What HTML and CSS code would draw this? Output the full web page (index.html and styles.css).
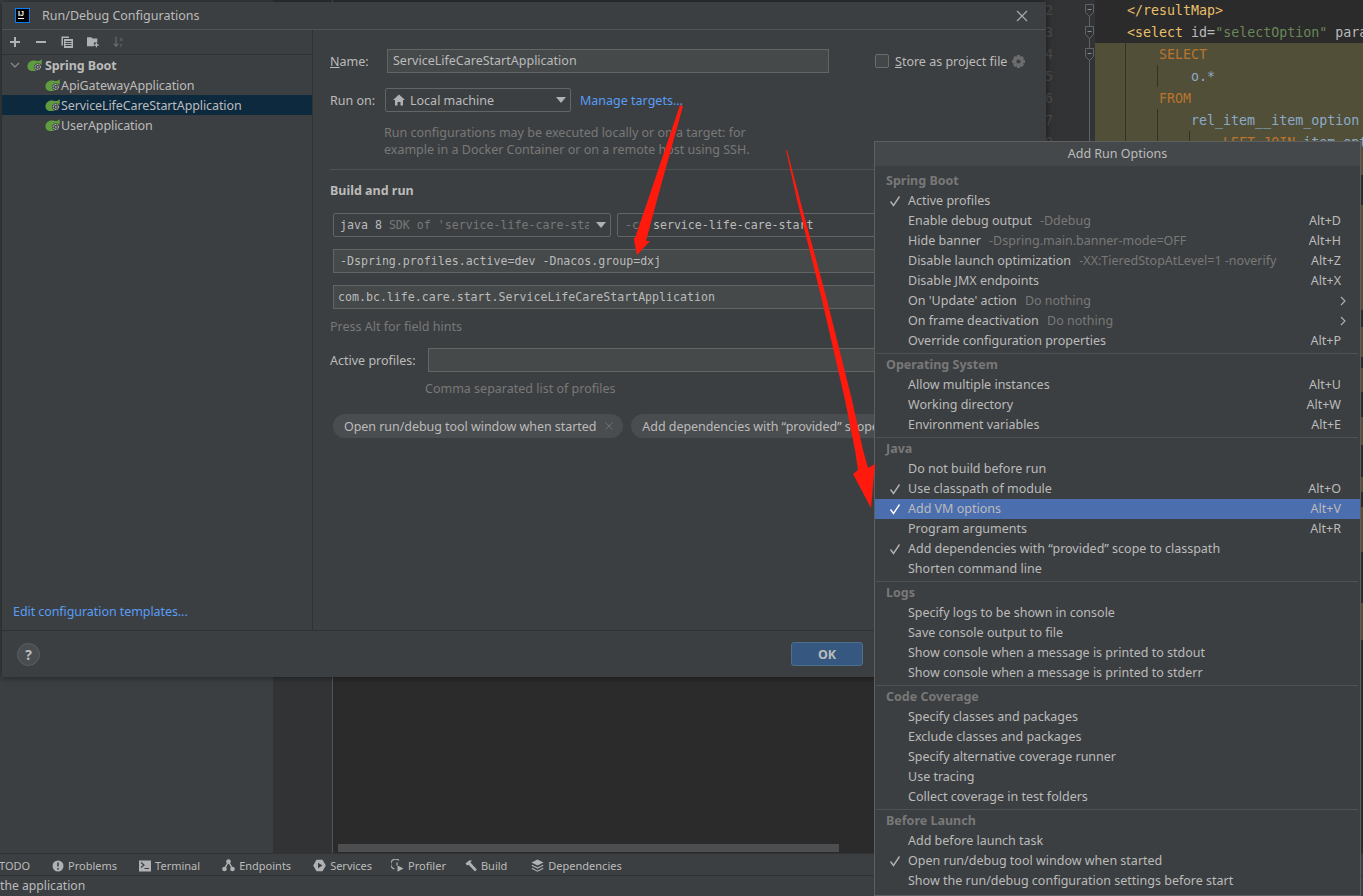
FILE: index.html
```html
<!DOCTYPE html>
<html lang="en">
<head>
  <meta charset="UTF-8" />
  <title>Run/Debug Configurations</title>
  <link rel="stylesheet" href="styles.css">
</head>
<body>

  <svg class="icon-defs" width="0" height="0">
    <symbol id="spring" viewBox="0 0 17 14">
      <path d="M.5 8.500C.5 3 6 1.500 9.500 2.500 11.500 3 14.500 2.500 15.500 .5 16.500 5 15 10 12 12 8 14.500 .5 14 .5 8.500Z" fill="#5f9b3f"/>
      <circle cx="11.500" cy="9" r="3.900" fill="#3c3f41"/>
      <circle cx="11.500" cy="9" r="2.700" fill="none" stroke="#afb1b3" stroke-width="1.200" stroke-dasharray="1.400 .5"/>
      <circle cx="11.500" cy="9" r=".9" fill="#afb1b3"/>
    </symbol>
    <symbol id="fold" viewBox="0 0 9 13">
      <path d="M.5 .5H8.500V8.500L4.500 12.500.5 8.500Z" fill="#313335" stroke="#606366"/>
      <path d="M2.500 5.500H6.500" stroke="#8b8d8f"/>
    </symbol>
    <symbol id="check" viewBox="0 0 12 12">
      <path d="M1.500 6.500 4.500 10.500 10.500 1.500" fill="none" stroke="currentColor" stroke-width="1.400"/>
    </symbol>
    <symbol id="chevron" viewBox="0 0 6 10">
      <path d="M1 1 5 5 1 9" fill="none" stroke="#afb1b3" stroke-width="1.100"/>
    </symbol>
  </svg>

  <div class="ide">
    <div class="ide-main">
      <div class="project-panel"></div>
      <div class="tool-gutter"></div>

      <div class="work-area">
        <div class="editor">
          <div class="line-gutter">
            <div class="gutter-line">2 <svg class="fold"><use href="#fold"/></svg></div>
            <div class="gutter-line">3 <svg class="fold"><use href="#fold"/></svg></div>
            <div class="gutter-line">4 <svg class="fold"><use href="#fold"/></svg></div>
            <div class="gutter-line">5</div>
            <div class="gutter-line">6</div>
            <div class="gutter-line">7</div>
            <div class="gutter-line">8</div>
          </div>
          <div class="code">
            <div class="code-line">    <span class="tag">&lt;/resultMap&gt;</span></div>
            <div class="code-line">    <span class="tag">&lt;select</span> <span class="attr">id=</span><span class="str">"selectOption"</span> <span class="attr">para</span></div>
            <div class="code-line sql guide-1">        <span class="kw">SELECT</span></div>
            <div class="code-line sql guide-2">            <span class="col">o.*</span></div>
            <div class="code-line sql guide-1">        <span class="kw">FROM</span></div>
            <div class="code-line sql guide-2">            <span class="col">rel_item__item_option</span></div>
            <div class="code-line sql guide-3">                <span class="kw">LEFT JOIN</span> <span class="col">item_opt</span></div>
            <div class="code-rest"></div>
          </div>
        </div>

        <div class="run-panel">
          <div class="run-scrollbar"></div>
        </div>
      </div>
    </div>

    <div class="tool-strip">
      <span class="tool-item tool-todo">TODO</span>
      <span class="tool-item">
        <svg class="tool-icon" viewBox="0 0 12 12"><circle cx="6" cy="6" r="5.500" fill="#afb1b3"/><path d="M6 2.500V6.500M6 8V9.500" stroke="#3c3f41" stroke-width="1.600"/></svg>
        Problems
      </span>
      <span class="tool-item">
        <svg class="tool-icon" viewBox="0 0 12 12"><rect width="12" height="11" y=".5" fill="#afb1b3"/><path d="M2 2.500 5 5 2 7.500M5.500 8.500H10" fill="none" stroke="#3c3f41" stroke-width="1.200"/></svg>
        Terminal
      </span>
      <span class="tool-item">
        <svg class="tool-icon wide" viewBox="0 0 13 13"><path d="M2.500 10 6.500 2.500 10.500 10" fill="none" stroke="#afb1b3" stroke-width="1.500"/><circle cx="2.500" cy="10" r="2.300" fill="#afb1b3"/><circle cx="6.500" cy="2.500" r="2.300" fill="#afb1b3"/><circle cx="10.500" cy="10" r="2.300" fill="#afb1b3"/></svg>
        Endpoints
      </span>
      <span class="tool-item">
        <svg class="tool-icon wide" viewBox="0 0 13 13"><path d="M3.500 .8H9.500L12.800 6.500 9.500 12.200H3.500L.2 6.500Z" fill="#afb1b3"/><path d="M5 3.800 9.500 6.500 5 9.200Z" fill="#3c3f41"/></svg>
        Services
      </span>
      <span class="tool-item tool-profiler">
        <svg class="tool-icon wide" viewBox="0 0 12 13"><path d="M7.500 1.400A5 5 0 1 0 3 10" fill="none" stroke="#afb1b3" stroke-width="1.200"/><path d="M5.500 3.500V6.500" stroke="#afb1b3" stroke-width="1.200"/><path d="M6 6.500 12 9.500 6 12.800Z" fill="#afb1b3"/></svg>
        Profiler
      </span>
      <span class="tool-item tool-build">
        <svg class="tool-icon" viewBox="0 0 12 12"><path d="M.5 3.500 4 .5H7L5.500 2.500 11.800 9.500 10 11.500 3.500 4.800 2 5.500Z" fill="#afb1b3"/></svg>
        Build
      </span>
      <span class="tool-item tool-deps">
        <svg class="tool-icon wide" viewBox="0 0 13 13"><path d="M6.500 .5 12.500 3.500 6.500 6.500 .5 3.500Z" fill="#afb1b3"/><path d="M.8 6.300 6.500 9 12.200 6.300M.8 9.300 6.500 12.200 12.200 9.300" fill="none" stroke="#afb1b3" stroke-width="1.200"/></svg>
        Dependencies
      </span>
    </div>

    <div class="status-bar">the application</div>
  </div>

  <!-- Run/Debug dialog -->
  <div class="dialog">
    <div class="dialog-title">
      <span class="ij-logo"><span class="ij-text">IJ</span><span class="ij-bar"></span></span>
      <span class="dialog-name">Run/Debug Configurations</span>
      <svg class="dialog-close" viewBox="0 0 12 12"><path d="M1 1 11 11M11 1 1 11" stroke="#a8aaab" stroke-width="1.200"/></svg>
    </div>

    <div class="dialog-main">
      <div class="tree-pane">
        <div class="tree-toolbar">
          <svg class="tb-icon" viewBox="0 0 12 12"><path d="M6 1V11M1 6H11" stroke="#afb1b3" stroke-width="2"/></svg>
          <svg class="tb-icon" viewBox="0 0 12 12"><path d="M1 6H11" stroke="#afb1b3" stroke-width="2"/></svg>
          <svg class="tb-icon" viewBox="0 0 12 12"><path d="M.5 .5H8V2H2V9.500H.5Z" fill="#afb1b3"/><rect x="3" y="3" width="9" height="9" fill="#afb1b3"/><path d="M4.500 5.500H10.500M4.500 7.500H10.500M4.500 9.500H10.500" stroke="#3c3f41"/></svg>
          <svg class="tb-icon" viewBox="0 0 14 13"><path d="M0 1H5L6.500 2.500H12V7H8V11.500H0Z" fill="#afb1b3"/><path d="M11 7.500V12.500M8.500 10H13.500" stroke="#afb1b3" stroke-width="1.500"/></svg>
          <svg class="tb-icon" viewBox="0 0 14 13"><path d="M3.500 .5V11M1 8.500 3.500 11.500 6 8.500" fill="none" stroke="#6a6c6e" stroke-width="1.300"/><text class="sort-a" x="7.500" y="5.500">a</text><text class="sort-a" x="7.500" y="12.500">z</text></svg>
        </div>

        <div class="tree">
          <div class="tree-row">
            <svg class="tree-arrow" viewBox="0 0 10 6"><path d="M1 1 5 5 9 1" fill="none" stroke="#8b8d8f" stroke-width="1.200"/></svg>
            <svg class="spring"><use href="#spring"/></svg>
            <span class="tree-group">Spring Boot</span>
          </div>
          <div class="tree-row tree-child">
            <svg class="spring"><use href="#spring"/></svg>
            ApiGatewayApplication
          </div>
          <div class="tree-row tree-child selected">
            <svg class="spring"><use href="#spring"/></svg>
            ServiceLifeCareStartApplication
          </div>
          <div class="tree-row tree-child">
            <svg class="spring"><use href="#spring"/></svg>
            UserApplication
          </div>
        </div>

        <a class="templates-link">Edit configuration templates...</a>
      </div>

      <div class="config-pane">
        <div class="form-row name-row">
          <label class="form-label name-label"><u>N</u>ame:</label>
          <div class="field name-field">ServiceLifeCareStartApplication</div>
          <span class="store-box"></span>
          <span class="store-label"><u>S</u>tore as project file</span>
          <svg class="store-gear" viewBox="0 0 14 14"><path d="M5.500 0H8.500L9 2 10.800 1.200 12.800 3.200 12 5 14 5.500V8.500L12 9 12.800 10.800 10.800 12.800 9 12 8.500 14H5.500L5 12 3.200 12.800 1.200 10.800 2 9 0 8.500V5.500L2 5 1.200 3.200 3.200 1.200 5 2Z" fill="#6a6c6e"/><circle cx="7" cy="7" r="2.200" fill="#3c3f41"/></svg>
        </div>

        <div class="form-row run-row">
          <label class="form-label run-label">Run on:</label>
          <div class="combo run-combo">
            <svg class="home-icon" viewBox="0 0 12 12"><path d="M6 .5 12 6H10V11.500H7.500V8H4.500V11.500H2V6H0Z" fill="#afb1b3"/></svg>
            Local machine
            <span class="combo-arrow"></span>
          </div>
          <a class="manage-link">Manage targets...</a>
        </div>

        <p class="run-help">Run configurations may be executed locally or on a target: for<br>example in a Docker Container or on a remote host using SSH.</p>

        <div class="section-rule"></div>
        <h3 class="section-title">Build and run</h3>

        <div class="form-row build-row">
          <div class="combo sdk-combo mono"><span class="sdk-text">java 8 <span class="mono-dim">SDK of 'service-life-care-sta</span></span><span class="combo-arrow"></span></div>
          <div class="combo module-combo mono"><span class="mono-dim">-cp</span> <span class="module-name">service-life-care-start</span></div>
        </div>
        <div class="field wide-field vm-field mono">-Dspring.profiles.active=dev -Dnacos.group=dxj</div>
        <div class="field wide-field main-field mono">com.bc.life.care.start.ServiceLifeCareStartApplication</div>

        <div class="field-hint">Press Alt for field hints</div>

        <div class="form-row profile-row">
          <label class="form-label profile-label">Active profiles:</label>
          <div class="field profile-field"></div>
        </div>
        <div class="profile-hint">Comma separated list of profiles</div>

        <div class="chips">
          <span class="chip">Open run/debug tool window when started
            <svg class="chip-close" viewBox="0 0 8 8"><path d="M.5 .5 7.500 7.500M7.500 .5 .5 7.500" stroke="#6e7072"/></svg>
          </span>
          <span class="chip">Add dependencies with “provided” scope to classpath</span>
        </div>
      </div>
    </div>

    <div class="dialog-footer">
      <span class="help-btn">?</span>
      <button class="ok-btn">OK</button>
    </div>
  </div>

  <!-- Add Run Options popup -->
  <div class="popup">
    <div class="popup-title">Add Run Options</div>

    <div class="popup-section">
      <div class="popup-heading">Spring Boot</div>
      <div class="popup-item"><svg class="check"><use href="#check"/></svg>Active profiles</div>
      <div class="popup-item">Enable debug output <span class="hint">-Ddebug</span><span class="keys">Alt+D</span></div>
      <div class="popup-item">Hide banner <span class="hint">-Dspring.main.banner-mode=OFF</span><span class="keys">Alt+H</span></div>
      <div class="popup-item">Disable launch optimization <span class="hint">-XX:TieredStopAtLevel=1 -noverify</span><span class="keys">Alt+Z</span></div>
      <div class="popup-item">Disable JMX endpoints<span class="keys">Alt+X</span></div>
      <div class="popup-item">On 'Update' action <span class="hint">Do nothing</span><svg class="submenu"><use href="#chevron"/></svg></div>
      <div class="popup-item">On frame deactivation <span class="hint">Do nothing</span><svg class="submenu"><use href="#chevron"/></svg></div>
      <div class="popup-item">Override configuration properties<span class="keys">Alt+P</span></div>
    </div>

    <div class="popup-section">
      <div class="popup-heading">Operating System</div>
      <div class="popup-item">Allow multiple instances<span class="keys">Alt+U</span></div>
      <div class="popup-item">Working directory<span class="keys">Alt+W</span></div>
      <div class="popup-item">Environment variables<span class="keys">Alt+E</span></div>
    </div>

    <div class="popup-section">
      <div class="popup-heading">Java</div>
      <div class="popup-item">Do not build before run</div>
      <div class="popup-item"><svg class="check"><use href="#check"/></svg>Use classpath of module<span class="keys">Alt+O</span></div>
      <div class="popup-item active"><svg class="check"><use href="#check"/></svg>Add VM options<span class="keys">Alt+V</span></div>
      <div class="popup-item">Program arguments<span class="keys">Alt+R</span></div>
      <div class="popup-item"><svg class="check"><use href="#check"/></svg>Add dependencies with “provided” scope to classpath</div>
      <div class="popup-item">Shorten command line</div>
    </div>

    <div class="popup-section">
      <div class="popup-heading">Logs</div>
      <div class="popup-item">Specify logs to be shown in console</div>
      <div class="popup-item">Save console output to file</div>
      <div class="popup-item">Show console when a message is printed to stdout</div>
      <div class="popup-item">Show console when a message is printed to stderr</div>
    </div>

    <div class="popup-section">
      <div class="popup-heading">Code Coverage</div>
      <div class="popup-item">Specify classes and packages</div>
      <div class="popup-item">Exclude classes and packages</div>
      <div class="popup-item">Specify alternative coverage runner</div>
      <div class="popup-item">Use tracing</div>
      <div class="popup-item">Collect coverage in test folders</div>
    </div>

    <div class="popup-section">
      <div class="popup-heading">Before Launch</div>
      <div class="popup-item">Add before launch task</div>
      <div class="popup-item"><svg class="check"><use href="#check"/></svg>Open run/debug tool window when started</div>
      <div class="popup-item">Show the run/debug configuration settings before start</div>
    </div>
  </div>

  <!-- Red annotation arrows drawn over the screenshot -->
  <svg class="arrows" viewBox="0 0 1363 896">
    <path d="M680 105 683 106 657 200 646 241 650 241 637 255 633.600 238 635 238 648 200Z" fill="#ff1a0d"/>
    <path d="M786 150 787 150 800 200 827 300 852 400 863 450 868 468 875 464 871 508 853 474 858 470 855 450 845 400 822 300 797 200Z" fill="#ff1a0d"/>
  </svg>

</body>
</html>
```

FILE: styles.css
```css
* {
  box-sizing: border-box;
}

html, body {
  margin: 0;
  height: 896px;
  overflow: hidden;
}

body {
  position: relative;
  font-family: "Noto Sans", sans-serif;
  font-size: 12.5px;
  color: #bbbbbb;
  background-color: #2b2b2b;
}

.icon-defs {
  position: absolute;
}

.mono {
  font-family: "DejaVu Sans Mono", monospace;
  font-size: 11.6px;
}

.mono-dim {
  color: #787878;
}

/* IDE behind the dialog */
.ide {
  height: 896px;
  display: flex;
  flex-direction: column;
}

.ide-main {
  height: 853px;
  flex-shrink: 0;
  display: flex;
}

.project-panel {
  width: 273px;
  flex-shrink: 0;
  background-color: #3c3f41;
}

.tool-gutter {
  width: 59px;
  flex-shrink: 0;
  background-color: #313335;
}

.work-area {
  flex: 1;
  min-width: 0;
  display: flex;
  flex-direction: column;
  border-left: 1px solid #555555;
}

.editor {
  height: 640px;
  flex-shrink: 0;
  display: flex;
  font-family: "DejaVu Sans Mono", monospace;
  font-size: 13.3px;
}

.line-gutter {
  width: 762px;
  flex-shrink: 0;
  margin-top: -1px;
  background-color: #313335;
  background-image: linear-gradient(#606366, #606366);
  background-repeat: no-repeat;
  background-size: 1px 100%;
  background-position: 756px 12px;
  color: #4b4d4f;
}

.gutter-line {
  height: 22px;
  line-height: 24px;
  padding-left: 712px;
  position: relative;
}

.fold {
  position: absolute;
  left: 752px;
  top: 5px;
  width: 9px;
  height: 13px;
}

.code {
  flex: 1;
  min-width: 0;
  margin-top: -1px;
  display: flex;
  flex-direction: column;
  overflow: hidden;
  background-color: #2b2b2b;
}

.code-line {
  height: 22px;
  flex-shrink: 0;
  line-height: 24px;
  white-space: pre;
  background-repeat: no-repeat;
  color: #a9b7c6;
}

.sql {
  background-color: #524f38;
}

.guide-1 {
  background-image: linear-gradient(#32312a, #32312a);
  background-size: 1px 100%;
  background-position: 30px 0;
}

.guide-2 {
  background-image: linear-gradient(#32312a, #32312a), linear-gradient(#32312a, #32312a);
  background-size: 1px 100%, 1px 100%;
  background-position: 30px 0, 62px 0;
}

.guide-3 {
  background-image: linear-gradient(#32312a, #32312a), linear-gradient(#32312a, #32312a), linear-gradient(#32312a, #32312a);
  background-size: 1px 100%, 1px 100%, 1px 100%;
  background-position: 30px 0, 62px 0, 94px 0;
}

.tag {
  color: #e8bf6a;
}

.attr {
  color: #bababa;
}

.str {
  color: #6a8759;
}

.kw {
  color: #b9752f;
}

.col {
  color: #8caac8;
}

/* right edge of the editor, the only part the popup leaves visible */
.code-rest {
  flex: 1;
  background: linear-gradient(to bottom,
    #524f38 0 22px, #2b2b2b 22px 52px,
    #524f38 52px 157px, #2b2b2b 157px 174px,
    #524f38 174px 204px, #2b2b2b 204px 215px,
    #524f38 215px 239px, #2b2b2b 239px 264px,
    #524f38 264px 292px, #2b2b2b 292px 324px,
    #524f38 324px 339px, #2b2b2b 339px 354px,
    #524f38 354px 399px, #2b2b2b 399px 450px,
    #524f38 450px);
}

.run-panel {
  flex: 1;
  display: flex;
  align-items: flex-end;
  padding: 0 0 1px 5px;
  background-color: #2b2b2b;
}

.run-scrollbar {
  width: 501px;
  height: 8px;
  background-color: #4d4e4f;
}

.tool-strip {
  height: 22px;
  flex-shrink: 0;
  display: flex;
  align-items: center;
  padding-top: 2px;
  font-size: 11px;
  background-color: #3c3f41;
  border-top: 1px solid #323232;
}

.tool-item {
  display: flex;
  align-items: center;
  gap: 4px;
  margin-right: 22px;
  white-space: nowrap;
}

.tool-todo {
  margin-left: -1px;
}

.tool-profiler {
  margin-left: -3px;
}

.tool-build {
  margin-left: -3px;
}

.tool-deps {
  margin-left: 2px;
}

.tool-icon {
  width: 12px;
  height: 12px;
}

.tool-icon.wide {
  width: 13px;
  height: 13px;
}

.status-bar {
  height: 21px;
  line-height: 19px;
  font-size: 12.2px;
  background-color: #3c3f41;
  border-top: 1px solid #323232;
}

/* Dialog window */
.dialog {
  position: absolute;
  left: 2px;
  top: 2px;
  width: 1044px;
  height: 675px;
  display: flex;
  flex-direction: column;
  background-color: #3c3f41;
  box-shadow: 0 0 7px rgba(0, 0, 0, 0.55);
}

.dialog-title {
  height: 28px;
  flex-shrink: 0;
  display: flex;
  align-items: center;
  padding: 0 18px 0 13px;
  border-bottom: 1px solid #505254;
}

.ij-logo {
  width: 15px;
  height: 15px;
  padding: 1px 0 0 2px;
  display: flex;
  flex-direction: column;
  background-color: #000000;
  border: 1px solid #087cfa;
}

.ij-text {
  font-family: "Liberation Sans", sans-serif;
  font-size: 7px;
  font-weight: bold;
  line-height: 7px;
  color: #ffffff;
}

.ij-bar {
  width: 6px;
  height: 1px;
  margin-top: 1px;
  background-color: #ffffff;
}

.dialog-name {
  margin-left: 12px;
  flex: 1;
}

.dialog-close {
  width: 12px;
  height: 12px;
}

.dialog-main {
  height: 600px;
  flex-shrink: 0;
  display: flex;
}

.tree-pane {
  width: 311px;
  flex-shrink: 0;
  display: flex;
  flex-direction: column;
  border-right: 1px solid #323232;
}

.tree-toolbar {
  height: 25px;
  flex-shrink: 0;
  display: flex;
  align-items: center;
  gap: 14px;
  padding-left: 7px;
  border-bottom: 1px solid #323232;
}

.tb-icon {
  width: 12px;
  height: 12px;
}

.sort-a {
  font-family: "Liberation Sans", sans-serif;
  font-size: 6.500px;
  fill: #6a6c6e;
}

.tree-row {
  height: 20px;
  display: flex;
  align-items: center;
  padding-left: 8px;
  letter-spacing: -0.1px;
  white-space: nowrap;
}

.tree-arrow {
  width: 10px;
  height: 6px;
  margin-right: 7px;
}

.spring {
  width: 16px;
  height: 14px;
  flex-shrink: 0;
}

.tree-group {
  margin-left: 2px;
  font-weight: bold;
}

.tree-child {
  padding-left: 43px;
}

.selected {
  background-color: #0d293e;
}

.templates-link {
  margin: auto 0 10px 11px;
  letter-spacing: -0.07px;
  color: #589df6;
}

.config-pane {
  flex: 1;
  min-width: 0;
  padding-left: 17px;
  overflow: hidden;
}

.form-row {
  display: flex;
  align-items: center;
  height: 24px;
}

.form-label {
  flex-shrink: 0;
}

.field {
  height: 24px;
  line-height: 22px;
  padding: 0 5px;
  background-color: #45494a;
  border: 1px solid #646464;
  white-space: nowrap;
}

.name-row {
  margin-top: 19px;
}

.name-label {
  width: 57px;
}

.name-field {
  width: 442px;
}

.store-box {
  width: 14px;
  height: 14px;
  margin-left: 46px;
  border: 1px solid #6b6b6b;
  border-radius: 2px;
  background-color: #43474a;
}

.store-label {
  margin-left: 6px;
  white-space: nowrap;
}

.store-gear {
  width: 13px;
  height: 13px;
  margin-left: 5px;
}

.run-row {
  margin-top: 15px;
}

.run-label {
  width: 55px;
}

.combo {
  height: 24px;
  display: flex;
  align-items: center;
  position: relative;
  border: 1px solid #646464;
  border-radius: 2px;
  white-space: nowrap;
}

.combo-arrow {
  position: absolute;
  right: 4px;
  top: 8px;
  border-left: 5px solid transparent;
  border-right: 5px solid transparent;
  border-top: 6px solid #afb1b3;
}

.run-combo {
  width: 186px;
  padding-left: 7px;
}

.home-icon {
  width: 12px;
  height: 12px;
  margin-right: 5px;
}

.manage-link {
  margin-left: 9px;
  color: #589df6;
}

.run-help {
  margin: 12px 0 0 54px;
  line-height: 17px;
  color: #787878;
}

.section-rule {
  height: 1px;
  margin-top: 11px;
  background-color: #515151;
}

.section-title {
  margin: 11px 0 0;
  height: 20px;
  line-height: 20px;
  font-size: 12.5px;
  font-weight: bold;
}

.build-row {
  margin: 12px 0 0 3px;
}

.sdk-combo {
  width: 278px;
  flex-shrink: 0;
  padding-left: 6px;
}

.sdk-text {
  width: 249px;
  overflow: hidden;
}

.module-combo {
  flex: 1;
  margin: 0 16px 0 6px;
  padding-left: 7px;
}

.module-name {
  margin-left: 7px;
}

.wide-field {
  margin: 12px 16px 0 3px;
}

.vm-field {
  padding-left: 6px;
}

.main-field {
  padding-left: 4px;
}

.field-hint {
  height: 20px;
  line-height: 20px;
  margin-top: 8px;
  color: #787878;
}

.profile-row {
  margin-top: 11px;
}

.profile-label {
  width: 98px;
}

.profile-field {
  flex: 1;
  margin-right: 16px;
}

.profile-hint {
  height: 20px;
  line-height: 20px;
  margin: 7px 0 0 95px;
  color: #787878;
}

.chips {
  display: flex;
  gap: 8px;
  margin: 15px 0 0 3px;
}

.chip {
  height: 24px;
  display: flex;
  align-items: center;
  padding: 0 11px;
  border-radius: 12px;
  background-color: #4a4d4f;
  letter-spacing: -0.05px;
  white-space: nowrap;
}

.chip-close {
  width: 8px;
  height: 8px;
  margin: 0 -1px 0 9px;
}

.dialog-footer {
  flex: 1;
  display: flex;
  align-items: center;
  justify-content: space-between;
  padding: 0 183px 0 15px;
  border-top: 1px solid #323232;
}

.help-btn {
  width: 23px;
  height: 23px;
  border-radius: 50%;
  background-color: #4a4d4f;
  border: 1px solid #5d5f60;
  text-align: center;
  line-height: 21px;
  font-weight: bold;
  font-size: 14px;
}

.ok-btn {
  width: 72px;
  height: 24px;
  font-family: "Noto Sans", sans-serif;
  font-size: 12.5px;
  font-weight: bold;
  color: #bbbbbb;
  background-color: #365880;
  border: 1px solid #4c708c;
  border-radius: 3px;
}

/* Popup */
.popup {
  position: absolute;
  left: 874px;
  top: 141px;
  width: 487px;
  height: 755px;
  background-color: #3c3f41;
  border: 1px solid #5e6060;
}

.popup-title {
  height: 24px;
  line-height: 24px;
  text-align: center;
  background-color: #45484a;
}

.popup-section {
  margin-top: 2px;
  position: relative;
  padding-top: 1px;
  border-top: 1px solid #515151;
  border-image: linear-gradient(to right, transparent 2px, #515151 2px, #515151 calc(100% - 3px), transparent calc(100% - 3px)) 1;
}

.popup-title + .popup-section {
  margin-top: 0;
  padding-top: 5px;
  border-top: none;
}

.popup-heading {
  height: 20px;
  line-height: 20px;
  padding-left: 11px;
  font-weight: bold;
  color: #787878;
}

.popup-item {
  height: 20px;
  display: flex;
  align-items: center;
  padding: 0 0 2px 33px;
  position: relative;
  white-space: pre;
}

.popup-item.active {
  background-color: #4b6eaf;
}

.hint {
  margin-left: 5px;
  color: #787878;
}

.keys {
  position: absolute;
  right: 19px;
}

.check {
  position: absolute;
  left: 14px;
  top: 4px;
  width: 12px;
  height: 12px;
  color: #afb1b3;
}

.active .check {
  color: #ffffff;
}

.submenu {
  position: absolute;
  right: 14px;
  top: 5px;
  width: 6px;
  height: 10px;
}

.arrows {
  position: absolute;
  left: 0;
  top: 0;
  width: 1363px;
  height: 896px;
  pointer-events: none;
}
```
